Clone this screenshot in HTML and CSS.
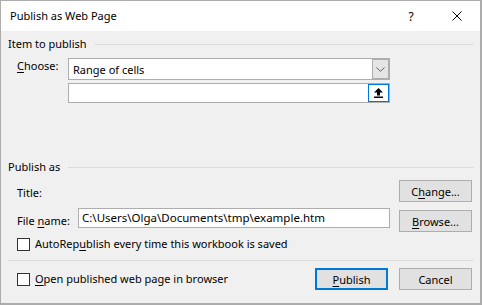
FILE: index.html
```html
<!DOCTYPE html>
<html>
<head>
<meta charset="utf-8">
<link rel="stylesheet" href="styles.css">
</head>
<body>
<div class="window">
  <div class="titlebar">
    <span class="title">Publish as Web Page</span>
    <span class="tbtn help">?</span>
    <span class="tbtn close">
      <svg width="10" height="10" viewBox="0 0 10 10"><path d="M0.5 0.5 L9.5 9.5 M9.5 0.5 L0.5 9.5" stroke="#000" stroke-width="1" fill="none"/></svg>
    </span>
  </div>
  <div class="content">
    <div class="group-head"><span>Item to publish</span><i class="rule"></i></div>
    <div class="choose-row">
      <span class="lbl choose-lbl"><u>C</u>hoose:</span>
      <div class="fields">
        <div class="select">
          <span class="sel-text">Range of cells</span>
          <span class="drop">
            <svg width="9" height="5" viewBox="0 0 9 5"><path d="M0.5 0.5 L4.5 4.3 L8.5 0.5" stroke="#606060" stroke-width="1" fill="none"/></svg>
          </span>
        </div>
        <div class="refinput">
          <span class="refbtn">
            <svg width="9" height="10" viewBox="0 0 9 10"><path d="M4.5 0 L9 4.5 L6 4.5 L6 7.5 L3 7.5 L3 4.5 L0 4.5 Z" fill="#000"/><rect x="0" y="8.5" width="9" height="1.5" fill="#000"/></svg>
          </span>
        </div>
      </div>
    </div>
    <div class="group-head pub-head"><span>Publish as</span><i class="rule"></i></div>
    <div class="title-row">
      <span class="lbl title-lbl">Title:</span>
      <span class="btn">C<u>h</u>ange...</span>
    </div>
    <div class="file-row">
      <span class="lbl file-lbl">File <u>n</u>ame:</span>
      <span class="textbox">C:\Users\Olga\Documents\tmp\example.htm</span>
      <span class="btn browse"><u>B</u>rowse...</span>
    </div>
    <div class="check-row">
      <span class="checkbox"></span>
      <span class="check-lbl">AutoRep<u>u</u>blish every time this workbook is saved</span>
    </div>
    <div class="separator"></div>
    <div class="footer">
      <span class="checkbox"></span>
      <span class="check-lbl"><u>O</u>pen published web page in browser</span>
      <span class="spacer"></span>
      <span class="btn default"><u>P</u>ublish</span>
      <span class="btn cancel">Cancel</span>
    </div>
  </div>
</div>
</body>
</html>
```
FILE: styles.css
```css
* { box-sizing: border-box; }
html, body { margin: 0; padding: 0; background: #fff; }
body {
  font-family: "Segoe UI", "Noto Sans", sans-serif;
  font-size: 11px;
  color: #000;
}
u { text-decoration-thickness: 1px; text-underline-offset: 2px; }

.window {
  width: 482px;
  height: 305px;
  border: 1px solid #acacac;
  border-right-width: 2px;
  border-bottom-width: 2px;
  background: #f0f0f0;
  display: flex;
  flex-direction: column;
}

.titlebar {
  height: 30px;
  flex: none;
  background: #fff;
  display: flex;
  align-items: center;
}
.title { flex: 1; padding-left: 9px; line-height: 16px; font-size: 11px; }
.tbtn {
  width: 46px;
  height: 30px;
  display: flex;
  align-items: center;
  justify-content: center;
}
.help { font-size: 12px; }

.content {
  flex: 1;
  padding: 5px 6px 0 7px;
  display: flex;
  flex-direction: column;
}

.group-head {
  height: 16px;
  line-height: 16px;
  display: flex;
  align-items: center;
}
.rule {
  flex: 1;
  height: 1px;
  background: #dcdcdc;
  margin-left: 8px;
}

.lbl { line-height: 16px; padding-left: 9px; }

.choose-row {
  margin-top: 6px;
  display: flex;
  align-items: flex-start;
}
.choose-lbl { width: 60px; }
.fields { width: 322px; display: flex; flex-direction: column; }
.select {
  height: 22px;
  border: 1px solid #adadad;
  background: #fff;
  display: flex;
  align-items: center;
}
.sel-text { flex: 1; padding-left: 4px; }
.drop {
  width: 17px;
  height: 20px;
  margin-left: auto;
  background: #e5e5e5;
  border: 1px solid #adadad;
  display: flex;
  align-items: center;
  justify-content: center;
}
.refinput {
  margin-top: 3px;
  height: 20px;
  border: 1px solid #adadad;
  background: #fff;
  display: flex;
  justify-content: flex-end;
}
.refbtn {
  width: 21px;
  height: 18px;
  border: 1px solid #0078d7;
  display: flex;
  align-items: center;
  justify-content: center;
}

.pub-head { margin-top: 56px; }

.btn {
  width: 73px;
  height: 22px;
  border: 1px solid #adadad;
  background: #e1e1e1;
  display: flex;
  align-items: center;
  justify-content: center;
  flex: none;
}
.btn.default { border: 2px solid #0078d7; }

.title-row {
  margin-top: 5px;
  display: flex;
  align-items: flex-start;
  justify-content: space-between;
  padding-right: 2px;
}
.title-lbl { margin-top: 5px; }

.file-row {
  margin-top: 6px;
  display: flex;
  align-items: flex-start;
}
.file-lbl { width: 70px; margin-top: 5px; }
.textbox {
  width: 312px;
  height: 20px;
  border: 1px solid #adadad;
  background: #fff;
  padding: 0 0 0 3px;
  font-size: 11.5px;
  line-height: 18px;
  white-space: nowrap;
  overflow: hidden;
}
.browse { margin-left: 9px; margin-top: 2px; }

.check-row {
  margin-top: 4px;
  height: 16px;
  display: flex;
  align-items: center;
  padding-left: 9px;
}
.checkbox {
  width: 13px;
  height: 13px;
  border: 1px solid #333;
  background: #fff;
  flex: none;
}
.check-lbl { margin-left: 5px; line-height: 16px; white-space: nowrap; }

.separator {
  margin-top: 8px;
  height: 1px;
  background: #dcdcdc;
}

.footer {
  margin-top: 7px;
  height: 22px;
  display: flex;
  align-items: center;
  padding-left: 9px;
  padding-right: 2px;
}
.spacer { flex: 1; }
.cancel { margin-left: 11px; }
```
